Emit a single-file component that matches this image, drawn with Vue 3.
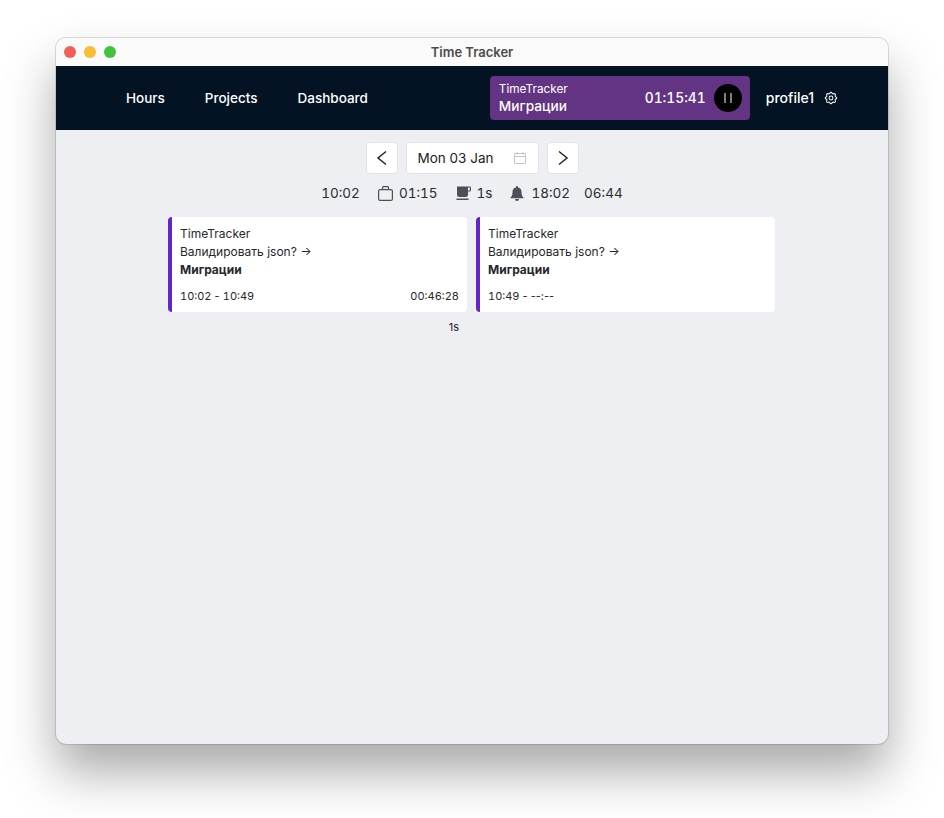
<template>
  <div class="page">
    <div class="window">
      <div class="titlebar">
        <div class="lights">
          <span class="light red"></span>
          <span class="light yellow"></span>
          <span class="light green"></span>
        </div>
        <div class="title">Time Tracker</div>
      </div>

      <nav class="nav">
        <div class="links">
          <a v-for="link in links" :key="link">{{ link }}</a>
        </div>
        <div class="tracker">
          <div class="tracker-info">
            <div class="tracker-project">TimeTracker</div>
            <div class="tracker-task">Миграции</div>
          </div>
          <div class="tracker-time">01:15:41</div>
          <button class="pause">
            <svg width="10" height="12" viewBox="0 0 10 12"><path d="M2 1v10M8 1v10" stroke="#fff" stroke-width="1" fill="none" /></svg>
          </button>
        </div>
        <div class="profile">
          <span>profile1</span>
          <svg width="14" height="14" viewBox="1 1 22 22" fill="none" stroke="#fff" stroke-width="1.600" stroke-linecap="round" stroke-linejoin="round">
            <path d="M10.3 4.300c.4-1.800 3-1.800 3.400 0a1.700 1.700 0 0 0 2.600 1.100c1.500-.9 3.300.8 2.400 2.400a1.700 1.700 0 0 0 1 2.500c1.800.4 1.800 3 0 3.400a1.700 1.700 0 0 0-1 2.600c.9 1.500-.9 3.300-2.400 2.400a1.700 1.700 0 0 0-2.600 1c-.4 1.800-3 1.800-3.400 0a1.700 1.700 0 0 0-2.600-1c-1.500.9-3.300-.9-2.400-2.400a1.700 1.700 0 0 0-1-2.600c-1.800-.4-1.800-3 0-3.400a1.700 1.700 0 0 0 1-2.500c-.9-1.600.9-3.300 2.400-2.400a1.700 1.700 0 0 0 2.600-1.100z" />
            <circle cx="12" cy="12" r="3" />
          </svg>
        </div>
      </nav>

      <main class="content">
        <div class="date-row">
          <button class="square">
            <svg width="12" height="16" viewBox="0 0 12 16" fill="none" stroke="#1f2430" stroke-width="1.500"><path d="M10 1.500 2 8l8 6.500" /></svg>
          </button>
          <div class="date">
            <span>Mon 03 Jan</span>
            <svg width="14" height="14" viewBox="0 0 14 14" fill="none" stroke="#c2c4ca" stroke-width="1"><path d="M1.500 2.500h11v10h-11zM1.500 5.500h11M4 1v2.500M10 1v2.500" /></svg>
          </div>
          <button class="square">
            <svg width="12" height="16" viewBox="0 0 12 16" fill="none" stroke="#1f2430" stroke-width="1.500"><path d="M2 1.500 10 8l-8 6.500" /></svg>
          </button>
        </div>

        <div class="stats">
          <span>10:02</span>
          <span class="stat">
            <svg width="15" height="15" viewBox="0 0 15 15" fill="none" stroke="#4b4f58" stroke-width="1.200"><rect x="0.600" y="3.600" width="13.800" height="10.800" rx="1.500" /><path d="M4.500 3.500V1.500a.9.900 0 0 1 .9-.9h4.200a.9.900 0 0 1 .9.900v2" /></svg>
            01:15
          </span>
          <span class="stat">
            <svg width="15" height="15" viewBox="0 0 15 15" fill="#4b4f58"><path d="M1 0.500h13a1 1 0 0 1 1 1V4a1.500 1.500 0 0 1-1.500 1.500h-1.500v3a2.500 2.500 0 0 1-2.500 2.500H3.500A2.500 2.500 0 0 1 1 8.500zM12 1.500v3h1.200a.6.600 0 0 0 .6-.6V1.500zM0.500 12.500h12V14h-12z" /></svg>
            1s
          </span>
          <span class="stat bell">
            <svg width="14" height="15" viewBox="0 0 14 15" fill="#4b4f58"><path d="M7 0a1 1 0 0 1 1 1v.600A4.500 4.500 0 0 1 11.500 6c0 3.500 1 4.500 2 5.500v.800H.500v-.800c1-1 2-2 2-5.500A4.500 4.500 0 0 1 6 1.600V1a1 1 0 0 1 1-1zM5 13h4a2 2 0 0 1-4 0z" /></svg>
            18:02
          </span>
          <span>06:44</span>
        </div>

        <div class="cards">
          <div v-for="card in cards" :key="card.start" class="card-col">
            <div class="card">
              <div>TimeTracker</div>
              <div>Валидировать json? →</div>
              <div class="card-task">Миграции</div>
              <div class="card-foot">
                <span><span class="num">{{ card.start }}</span> - <span :class="{ num: card.total }">{{ card.end }}</span></span>
                <span class="num">{{ card.total }}</span>
              </div>
            </div>
            <div class="gap-label">{{ card.gap }}</div>
          </div>
        </div>
      </main>
    </div>
  </div>
</template>

<script setup>
const links = ['Hours', 'Projects', 'Dashboard']

const cards = [
  { start: '10:02', end: '10:49', total: '00:46:28', gap: '1s' },
  { start: '10:49', end: '--:--', total: '', gap: '' },
]
</script>

<style>
html,
body {
  background: #fff;
}
</style>

<style scoped>
.page {
  height: 818px;
  box-sizing: border-box;
  padding: 38px 56px 0;
  overflow: hidden;
}
.window {
  height: 706px;
  border-radius: 10px;
  overflow: hidden;
  display: flex;
  flex-direction: column;
  background: #eeeff3;
  font-family: Inter, "Noto Sans", sans-serif;
  color: #1f2126;
  box-shadow: 0 0 0 1px rgba(0, 0, 0, 0.12), 0 28px 50px rgba(0, 0, 0, 0.34);
}
.titlebar {
  height: 28px;
  flex: none;
  position: relative;
  display: flex;
  align-items: center;
  justify-content: center;
  background: #fafafa;
}
.lights {
  position: absolute;
  left: 8px;
  top: 8px;
  display: flex;
  gap: 8px;
}
.light {
  width: 12px;
  height: 12px;
  border-radius: 50%;
}
.red { background: #f25f57; }
.yellow { background: #f9bc33; }
.green { background: #3fc23e; }
.title {
  font-size: 13px;
  font-weight: 600;
  color: #4c4c4c;
}
.nav {
  height: 64px;
  flex: none;
  display: flex;
  align-items: center;
  padding: 0 50px 0 70px;
  background: #031324;
  color: #fff;
  font-size: 13.500px;
  font-weight: 500;
}
.links {
  display: flex;
  gap: 40px;
  flex: 1;
}
.tracker {
  width: 260px;
  height: 44px;
  display: flex;
  align-items: center;
  padding: 0 8px 0 9px;
  box-sizing: border-box;
  border-radius: 4px;
  background: #623483;
}
.tracker-info {
  flex: 1;
  line-height: 17px;
}
.tracker-project {
  font-size: 11.800px;
  font-weight: 400;
}
.tracker-task {
  font-size: 13.700px;
  font-weight: 500;
}
.tracker-time {
  font-size: 13.800px;
  font-weight: 500;
  font-variant-numeric: tabular-nums;
  margin-right: 8px;
}
.pause {
  width: 28px;
  height: 28px;
  padding: 0;
  border: 0;
  border-radius: 50%;
  background: #000;
  display: flex;
  align-items: center;
  justify-content: center;
}
.profile {
  display: flex;
  align-items: center;
  gap: 10px;
  margin-left: 16px;
  font-size: 14px;
  line-height: 16px;
}
.content {
  flex: 1;
  display: flex;
  flex-direction: column;
  align-items: center;
  padding-top: 12px;
}
.date-row {
  display: flex;
  gap: 8px;
}
.square {
  width: 32px;
  height: 32px;
  padding: 0;
  box-sizing: border-box;
  border: 1px solid #e2e3e8;
  border-radius: 4px;
  background: #fff;
  display: flex;
  align-items: center;
  justify-content: center;
}
.date {
  width: 133px;
  height: 32px;
  box-sizing: border-box;
  padding: 0 11px;
  border: 1px solid #e2e3e8;
  border-radius: 4px;
  background: #fff;
  display: flex;
  align-items: center;
  justify-content: space-between;
  font-size: 13.500px;
}
.stats {
  display: flex;
  align-items: center;
  gap: 18px;
  height: 20px;
  margin-top: 9px;
  font-size: 13.500px;
  font-variant-numeric: tabular-nums;
  color: #2a2c32;
}
.stat {
  display: flex;
  align-items: center;
  gap: 6px;
}
.bell {
  gap: 7px;
  margin-right: -4px;
}
.cards {
  display: flex;
  gap: 9px;
  margin-top: 14px;
  margin-right: 1px;
}
.card-col {
  width: 299px;
}
.card {
  height: 95px;
  box-sizing: border-box;
  padding: 8px 8px 0 8px;
  border-left: 4px solid #6524c8;
  border-radius: 4px;
  background: #fff;
  font-size: 12px;
  line-height: 18px;
  color: #26282d;
}
.card-task {
  font-weight: 700;
}
.card-foot {
  display: flex;
  justify-content: space-between;
  margin-top: 8px;
  font-size: 11px;
}
.num {
  font-variant-numeric: tabular-nums;
}
.gap-label {
  height: 18px;
  margin-top: 6px;
  padding-right: 8px;
  text-align: right;
  font-size: 11px;
  line-height: 18px;
}
</style>
